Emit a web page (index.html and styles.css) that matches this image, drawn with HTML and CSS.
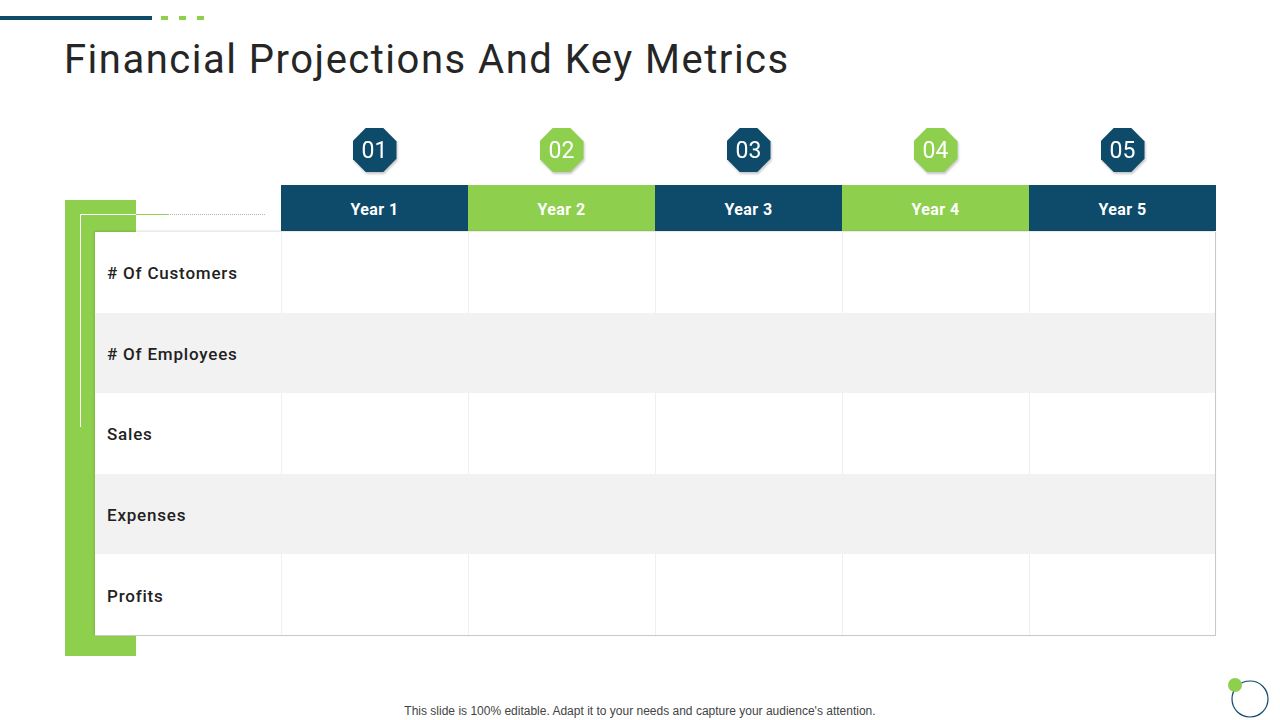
FILE: index.html
```html
<!DOCTYPE html>
<html>
<head>
<meta charset="utf-8">
<link rel="stylesheet" href="styles.css">
</head>
<body>
<div class="slide">
  <div class="topbar">
    <span class="bar-dark"></span>
    <span class="dash"></span><span class="dash"></span><span class="dash"></span>
  </div>
  <h1 class="title">Financial Projections And Key Metrics</h1>

  <div class="board">
    <div class="green-block"></div>
    <div class="line-v"></div>
    <div class="line-h"></div>
    <div class="line-g"></div>
    <div class="line-dot"></div>

    <div class="octs">
      <div class="oct-cell"><div class="oct-wrap"><div class="oct blue">01</div></div></div>
      <div class="oct-cell"><div class="oct-wrap"><div class="oct green">02</div></div></div>
      <div class="oct-cell"><div class="oct-wrap"><div class="oct blue">03</div></div></div>
      <div class="oct-cell"><div class="oct-wrap"><div class="oct green">04</div></div></div>
      <div class="oct-cell"><div class="oct-wrap"><div class="oct blue">05</div></div></div>
    </div>

    <div class="head">
      <div class="hcell blue">Year 1</div>
      <div class="hcell green">Year 2</div>
      <div class="hcell blue">Year 3</div>
      <div class="hcell green">Year 4</div>
      <div class="hcell blue">Year 5</div>
    </div>

    <div class="tbody">
      <div class="row">
        <div class="label"># Of Customers</div>
        <div class="cell"></div><div class="cell"></div><div class="cell"></div><div class="cell"></div><div class="cell"></div>
      </div>
      <div class="row alt">
        <div class="label"># Of Employees</div>
        <div class="cell"></div><div class="cell"></div><div class="cell"></div><div class="cell"></div><div class="cell"></div>
      </div>
      <div class="row">
        <div class="label">Sales</div>
        <div class="cell"></div><div class="cell"></div><div class="cell"></div><div class="cell"></div><div class="cell"></div>
      </div>
      <div class="row alt">
        <div class="label">Expenses</div>
        <div class="cell"></div><div class="cell"></div><div class="cell"></div><div class="cell"></div><div class="cell"></div>
      </div>
      <div class="row">
        <div class="label">Profits</div>
        <div class="cell"></div><div class="cell"></div><div class="cell"></div><div class="cell"></div><div class="cell"></div>
      </div>
    </div>
  </div>

  <p class="footer">This slide is 100% editable. Adapt it to your needs and capture your audience's attention.</p>

  <svg class="corner" width="44" height="44" viewBox="0 0 44 44">
    <circle cx="25" cy="24" r="18" fill="none" stroke="#0e4a6a" stroke-width="1.2"/>
    <circle cx="10" cy="10" r="7" fill="#8fcf4e"/>
  </svg>
</div>
</body>
</html>
```

FILE: styles.css
```css
* { box-sizing: border-box; }
html, body { margin: 0; padding: 0; background: #fff; }
.slide {
  position: relative;
  width: 1280px;
  height: 720px;
  overflow: hidden;
  font-family: Roboto, "Liberation Sans", sans-serif;
  color: #222;
}
.topbar {
  display: flex;
  align-items: center;
  gap: 11px;
  margin-top: 16px;
  height: 4px;
}
.bar-dark { display: block; width: 152px; height: 4px; background: #0e4a6a; }
.dash { display: block; width: 7px; height: 4px; background: #8fcf4e; }
.bar-dark + .dash { margin-left: -2px; }

.title {
  margin: 16px 0 0 64px;
  font-size: 40px;
  font-weight: 400;
  line-height: 48px;
  letter-spacing: 1.5px;
  color: #262626;
}

.board {
  position: relative;
  margin: 44px 0 0 65px;
  width: 1151px;
}
.green-block {
  position: absolute;
  left: 0; top: 72px;
  width: 71px; height: 456px;
  background: #8fcf4e;
}
.line-v {
  position: absolute;
  left: 15px; top: 86px;
  width: 1px; height: 213px;
  background: #fff;
}
.line-h {
  position: absolute;
  left: 15px; top: 86px;
  width: 56px; height: 1px;
  background: #fff;
}
.line-g {
  position: absolute;
  left: 71px; top: 86px;
  width: 31px; height: 1px;
  background: #8fcf4e;
}
.line-dot {
  position: absolute;
  left: 102px; top: 86px;
  width: 98px; height: 0;
  border-top: 1px dotted #b5b5b5;
}

.octs {
  display: grid;
  grid-template-columns: repeat(5, 187px);
  margin-left: 216px;
  height: 44px;
}
.oct-cell { display: flex; justify-content: center; }
.oct-wrap { filter: drop-shadow(1px 2px 1px rgba(0,0,0,0.22)); }
.oct {
  width: 44px; height: 44px;
  clip-path: polygon(30% 0, 70% 0, 100% 30%, 100% 70%, 70% 100%, 30% 100%, 0 70%, 0 30%);
  display: flex; align-items: center; justify-content: center;
  color: #fff;
  font-size: 23px;
  font-weight: 400;
}
.blue { background: #0e4a6a; }
.green { background: #8fcf4e; }

.head {
  position: relative;
  display: grid;
  grid-template-columns: repeat(5, 187px);
  margin: 13px 0 0 216px;
  height: 46px;
}
.hcell {
  display: flex; align-items: center; justify-content: center;
  padding-top: 2px;
  color: #fff;
  font-size: 16px;
  font-weight: 700;
  letter-spacing: 0.4px;
}

.tbody {
  position: relative;
  margin: 1px 0 0 30px;
  width: 1121px;
  background: #fff;
  border-right: 1px solid #c9c9c9;
  border-bottom: 1px solid #c9c9c9;
  box-shadow: -1px -1px 2px rgba(0,0,0,0.12);
}
.row {
  display: grid;
  grid-template-columns: 186px repeat(5, 187px);
  height: 80.6px;
}
.row.alt { background: #f2f2f2; }
.label {
  display: flex; align-items: center;
  padding-left: 12px;
  padding-top: 2px;
  font-size: 17px;
  font-weight: 500;
  color: #222;
  letter-spacing: 0.8px;
}
.cell { border-left: 1px solid #efefef; }
.row.alt .cell { border-left-color: #f2f2f2; }

.footer {
  position: absolute;
  left: 0; right: 0; top: 704px;
  margin: 0;
  text-align: center;
  font-family: "Liberation Sans", Arial, sans-serif;
  font-size: 12px;
  color: #444;
}
.corner {
  position: absolute;
  left: 1225px; top: 675px;
}
```
